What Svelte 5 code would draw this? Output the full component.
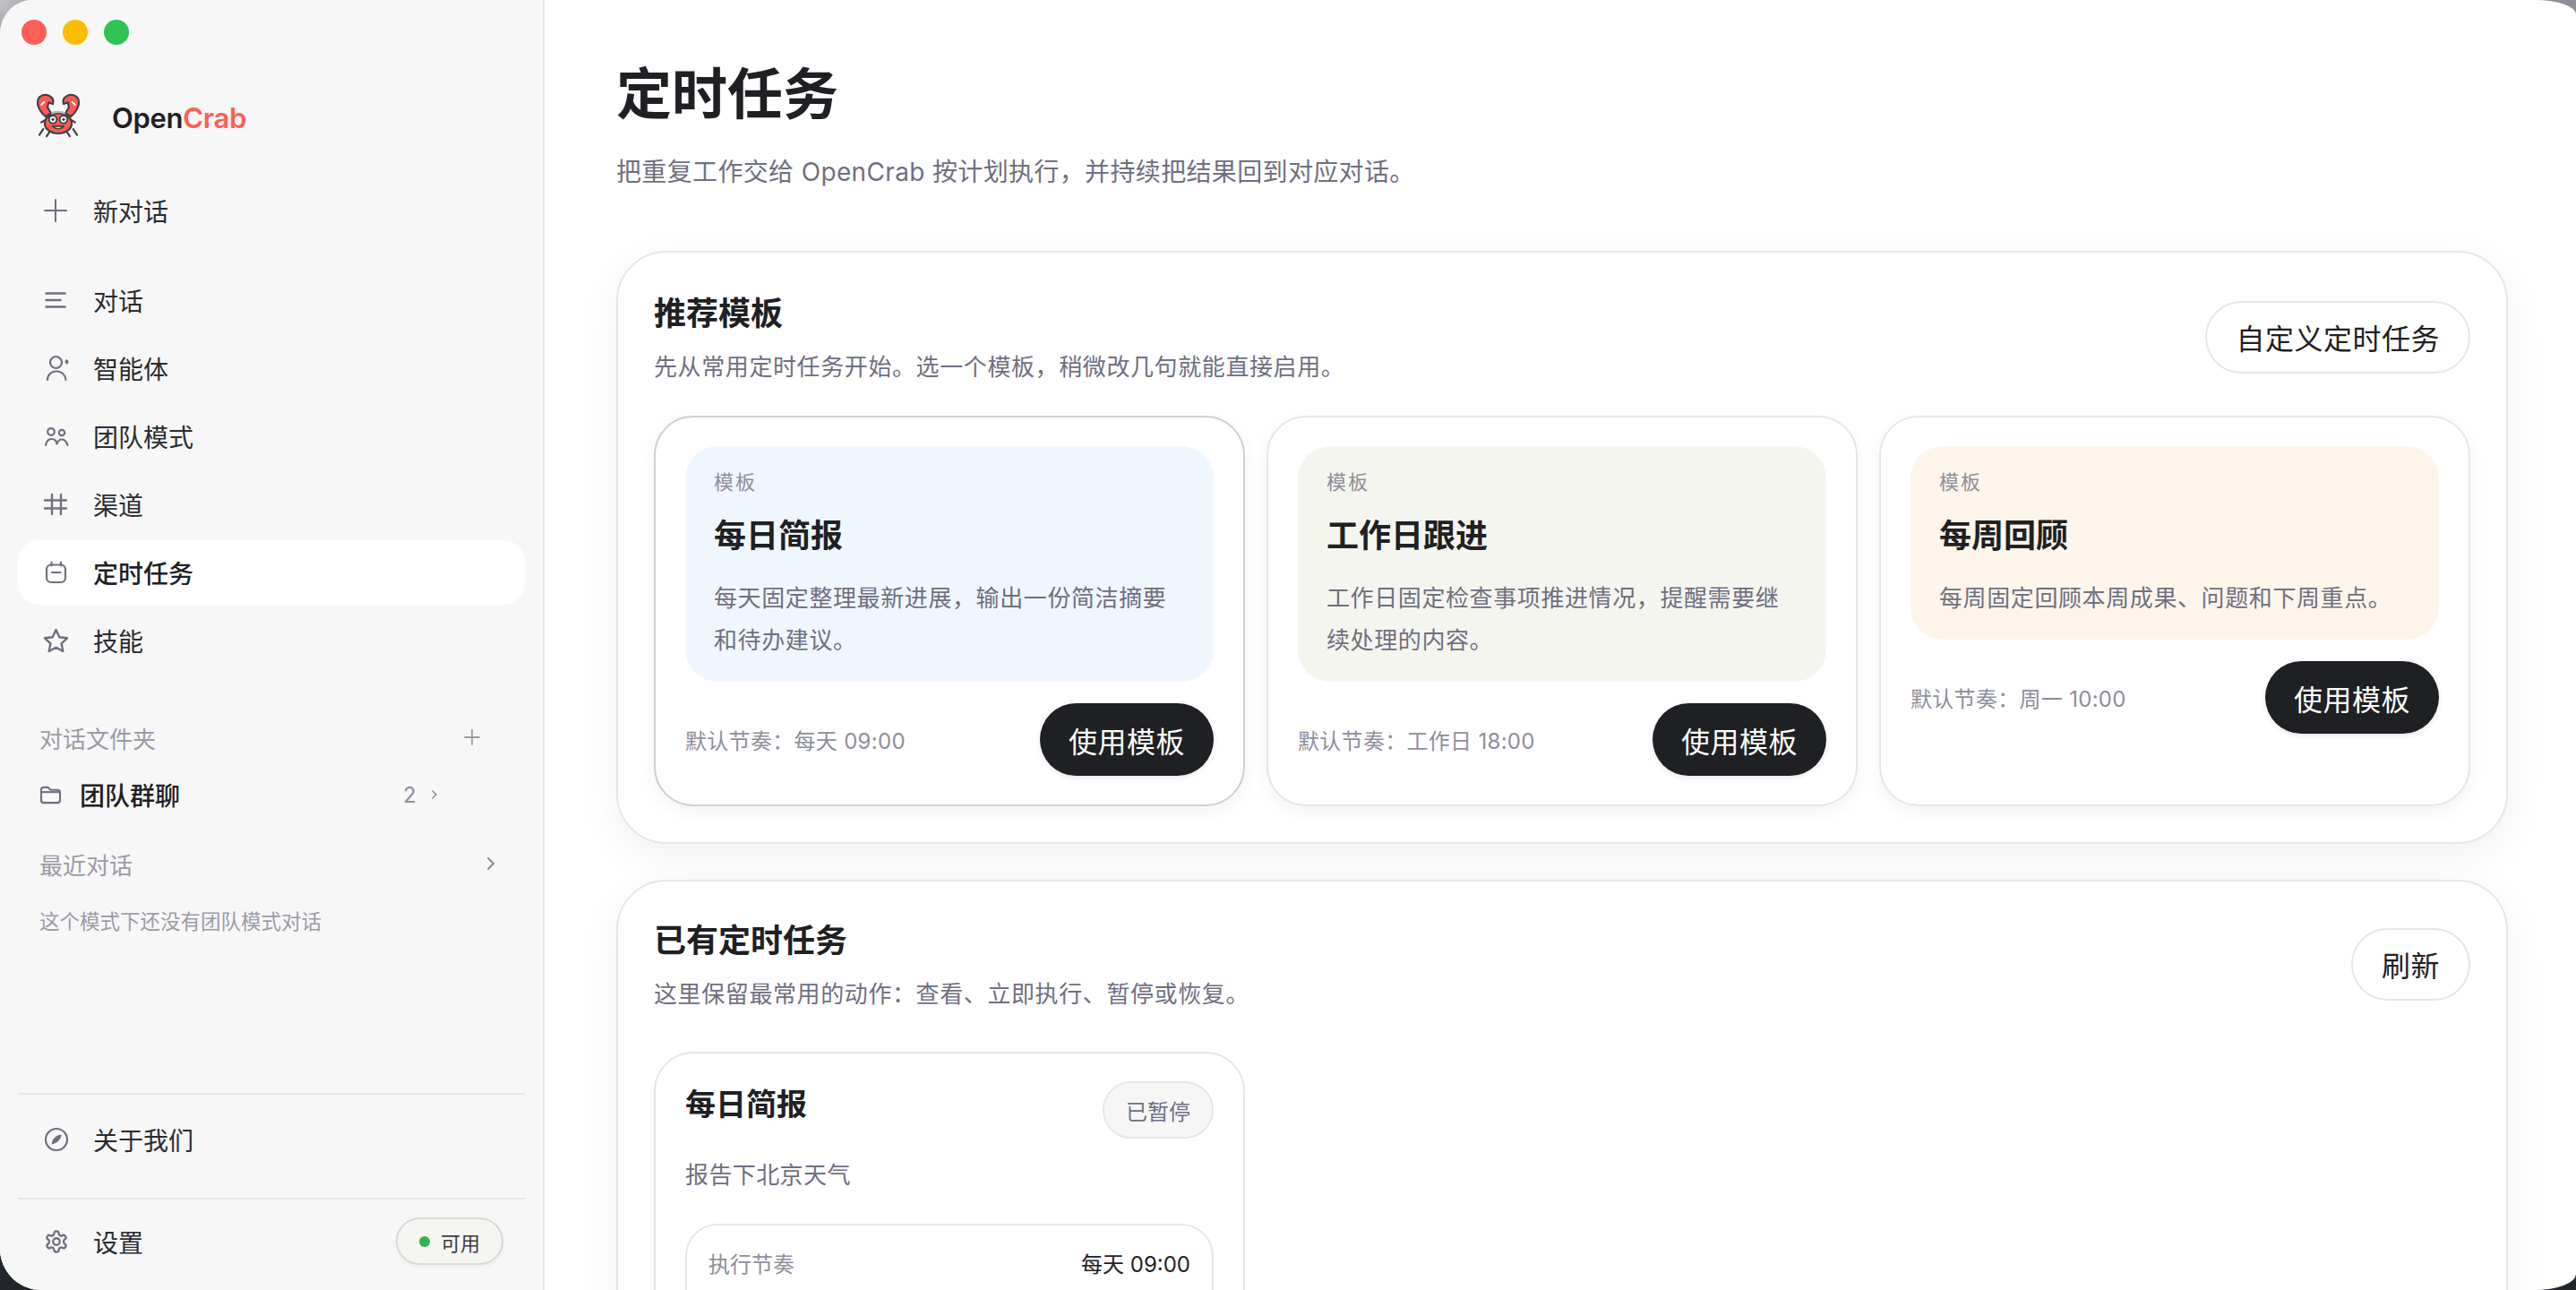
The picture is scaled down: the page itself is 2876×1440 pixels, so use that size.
<script>
  // Sidebar navigation
  const nav = [
    { label: '对话', icon: 'list' },
    { label: '智能体', icon: 'agent' },
    { label: '团队模式', icon: 'team' },
    { label: '渠道', icon: 'hash' },
    { label: '定时任务', icon: 'calendar', active: true },
    { label: '技能', icon: 'star' }
  ];

  const templates = [
    {
      title: '每日简报',
      desc: '每天固定整理最新进展，输出一份简洁摘要和待办建议。',
      cadence: '每天 09:00',
      tone: 'blue',
      focused: true
    },
    {
      title: '工作日跟进',
      desc: '工作日固定检查事项推进情况，提醒需要继续处理的内容。',
      cadence: '工作日 18:00',
      tone: 'sage'
    },
    {
      title: '每周回顾',
      desc: '每周固定回顾本周成果、问题和下周重点。',
      cadence: '周一 10:00',
      tone: 'peach'
    }
  ];
</script>

{#snippet icon(name)}
  <svg class="nav-icon" viewBox="0 0 28 28" fill="none" stroke="currentColor" stroke-width="2.2" stroke-linecap="round" stroke-linejoin="round">
    {#if name === 'plus'}
      <path d="M14 2v24M2 14h24" stroke-width="2" />
    {:else if name === 'list'}
      <path d="M3.5 6.5h21M3.5 14h16M3.5 21.5h21" stroke-width="2.4" />
    {:else if name === 'agent'}
      <circle cx="14.5" cy="7.5" r="6.5" />
      <path d="M5 27c0-5.5 4-9.5 10-9.5s10 4 10.5 9.5" />
      <path d="M26.5 4.5l1.8 2.5-1.8 2.5-1.5-2.5z" fill="currentColor" stroke-width="1" />
    {:else if name === 'team'}
      <circle cx="9" cy="9" r="3.8" />
      <circle cx="21" cy="10" r="3.2" />
      <path d="M3 24c1-5 3.5-7 6.5-7s5.5 2 6 5.5c1-3 3-5 5.5-5s5 2 6.5 6.5" />
    {:else if name === 'hash'}
      <path d="M10 3v22M20 3v22M2 9.5h24M2 18.5h24" stroke-width="2.4" />
    {:else if name === 'calendar'}
      <rect x="4" y="5.5" width="21" height="19.5" rx="5" />
      <path d="M9.5 2.5v4M20 2.5v4M10 14h9.5" />
    {:else if name === 'star'}
      <path d="M14.5 2l3.8 8.2 8.7 1.1-6.4 6 1.7 8.7-7.8-4.3-7.8 4.3 1.7-8.7-6.4-6 8.7-1.1z" stroke-width="2.4" />
    {:else if name === 'compass'}
      <circle cx="15" cy="14" r="12" />
      <path d="M20.5 8.5c-5.5.5-10 3.5-11 11 5.5-1 10.5-5 11-11z" fill="currentColor" stroke="none" />
    {:else if name === 'gear'}
      <g transform="translate(1 0) scale(1.167)" stroke-width="2">
        <path d="M12.22 2h-.44a2 2 0 0 0-2 2v.18a2 2 0 0 1-1 1.73l-.43.25a2 2 0 0 1-2 0l-.15-.08a2 2 0 0 0-2.73.73l-.22.38a2 2 0 0 0 .73 2.73l.15.1a2 2 0 0 1 1 1.72v.51a2 2 0 0 1-1 1.74l-.15.09a2 2 0 0 0-.73 2.73l.22.38a2 2 0 0 0 2.73.73l.15-.08a2 2 0 0 1 2 0l.43.25a2 2 0 0 1 1 1.73V20a2 2 0 0 0 2 2h.44a2 2 0 0 0 2-2v-.18a2 2 0 0 1 1-1.73l.43-.25a2 2 0 0 1 2 0l.15.08a2 2 0 0 0 2.73-.73l.22-.39a2 2 0 0 0-.73-2.73l-.15-.08a2 2 0 0 1-1-1.74v-.5a2 2 0 0 1 1-1.74l.15-.09a2 2 0 0 0 .73-2.73l-.22-.38a2 2 0 0 0-2.73-.73l-.15.08a2 2 0 0 1-2 0l-.43-.25a2 2 0 0 1-1-1.73V4a2 2 0 0 0-2-2z" />
        <circle cx="12" cy="12" r="3.2" />
      </g>
    {/if}
  </svg>
{/snippet}

<div class="window">
  <aside class="sidebar">
    <div class="lights">
      <span class="light dot-red"></span>
      <span class="light dot-yellow"></span>
      <span class="light dot-green"></span>
    </div>

    <div class="brand">
      <svg class="crab" viewBox="10 8 50 50">
        <g stroke="#3d4148" stroke-width="2" stroke-linecap="round" stroke-linejoin="round">
          <path d="M19.5 47l-4 6M26 50l-3 4.5M44 50l3 4.5M50.5 47l4 6M21 38l-3.5 2M49 38l3.5 2" fill="none" />
          <path d="M22 34c-5-4-9.5-11-8-17 1.5-5 8-7 12.5-4 3 2 4 5 3 8l-4.5-1.5-1 5 3.5 6z" fill="#ff5a4f" />
          <path d="M48 34c5-4 9.5-11 8-17-1.5-5-8-7-12.5-4-3 2-4 5-3 8l4.5-1.5 1 5-3.5 6z" fill="#ff5a4f" />
          <ellipse cx="35" cy="41" rx="14" ry="10.5" fill="#ff5a4f" />
        </g>
        <path d="M28 31c3-2.5 11-2.5 14 0" fill="none" stroke="#b9b9be" stroke-width="2" />
        <circle cx="29.5" cy="37" r="4" fill="#fff" stroke="#3d4148" stroke-width="1.8" />
        <circle cx="40.5" cy="37" r="4" fill="#fff" stroke="#3d4148" stroke-width="1.8" />
        <circle cx="29.5" cy="37" r="1.5" fill="#3d4148" />
        <circle cx="40.5" cy="37" r="1.5" fill="#3d4148" />
        <path d="M29 44c3.5 3.5 8.5 3.5 12 0z" fill="#fff" stroke="#3d4148" stroke-width="1.5" stroke-linejoin="round" />
        <path d="M17.5 22l3-3M49.5 19l3 3" stroke="#fff" stroke-width="1.8" stroke-linecap="round" />
      </svg>
      <span class="brand-name">Open<em>Crab</em></span>
    </div>

    <div class="nav-item new-chat">
      {@render icon('plus')}
      <span>新对话</span>
    </div>

    <nav class="nav">
      {#each nav as item}
        <div class="nav-item" class:active={item.active}>
          {@render icon(item.icon)}
          <span>{item.label}</span>
        </div>
      {/each}
    </nav>

    <div class="section-row folders">
      <span>对话文件夹</span>
      <svg class="mini-plus" viewBox="0 0 18 18" fill="none" stroke="currentColor" stroke-width="1.8" stroke-linecap="round"><path d="M9 1v16M1 9h16" /></svg>
    </div>

    <div class="folder-row">
      <svg class="folder-icon" viewBox="0 0 26 22" fill="none" stroke="currentColor" stroke-width="2.2" stroke-linejoin="round">
        <path d="M2 5a3 3 0 0 1 3-3h5l3 3h8a3 3 0 0 1 3 3v9a3 3 0 0 1-3 3H5a3 3 0 0 1-3-3z" />
        <path d="M2 7.5h22" />
      </svg>
      <span class="folder-name">团队群聊</span>
      <span class="folder-count">2</span>
      <svg class="folder-chev" viewBox="0 0 8 12" fill="none" stroke="currentColor" stroke-width="1.6" stroke-linecap="round" stroke-linejoin="round"><path d="M2 2l4 4-4 4" /></svg>
    </div>

    <div class="section-row recent">
      <span>最近对话</span>
      <svg class="recent-chev" viewBox="0 0 10 16" fill="none" stroke="currentColor" stroke-width="2" stroke-linecap="round" stroke-linejoin="round"><path d="M2 2l6 6-6 6" /></svg>
    </div>

    <p class="empty">这个模式下还没有团队模式对话</p>

    <div class="spacer"></div>

    <div class="foot about">
      <div class="nav-item">
        {@render icon('compass')}
        <span>关于我们</span>
      </div>
    </div>
    <div class="foot settings">
      <div class="nav-item">
        {@render icon('gear')}
        <span>设置</span>
      </div>
      <span class="status"><i></i>可用</span>
    </div>
  </aside>

  <main class="main">
    <h1>定时任务</h1>
    <p class="lead">把重复工作交给 OpenCrab 按计划执行，并持续把结果回到对应对话。</p>

    <section class="panel">
      <header class="panel-head">
        <div>
          <h2>推荐模板</h2>
          <p>先从常用定时任务开始。选一个模板，稍微改几句就能直接启用。</p>
        </div>
        <button class="ghost">自定义定时任务</button>
      </header>
      <div class="grid">
        {#each templates as t}
          <article class="tpl" class:focused={t.focused}>
            <div class="tpl-body {t.tone}">
              <span class="eyebrow">模板</span>
              <h3>{t.title}</h3>
              <p>{t.desc}</p>
            </div>
            <div class="tpl-foot">
              <span>默认节奏：{t.cadence}</span>
              <button class="solid">使用模板</button>
            </div>
          </article>
        {/each}
      </div>
    </section>

    <section class="panel second">
      <header class="panel-head">
        <div>
          <h2>已有定时任务</h2>
          <p>这里保留最常用的动作：查看、立即执行、暂停或恢复。</p>
        </div>
        <button class="ghost">刷新</button>
      </header>
      <div class="grid">
        <article class="task">
          <div class="task-head">
            <h3>每日简报</h3>
            <span class="paused">已暂停</span>
          </div>
          <p class="task-desc">报告下北京天气</p>
          <div class="task-meta">
            <span>执行节奏</span>
            <strong>每天 09:00</strong>
          </div>
        </article>
      </div>
    </section>
  </main>
</div>

<style>
  :global(html), :global(body) {
    margin: 0;
    height: 1440px;
    overflow: hidden;
    background:
      radial-gradient(60px at 0 0, #c4c4c8, transparent),
      linear-gradient(180deg, #8e8e98 0, #8e8e98 40px, #22252a 1400px);
  }

  .window {
    display: flex;
    width: 2876px;
    height: 1440px;
    border-radius: 36px 45px 46px 46px / 38px 16px 18px 46px;
    overflow: hidden;
    background: #fff;
    font-family: Inter, "Noto Sans CJK SC", sans-serif;
    color: #1f2023;
  }

  /* Sidebar */
  .sidebar {
    width: 608px;
    flex: none;
    box-sizing: border-box;
    padding: 22px 20px 0;
    display: flex;
    flex-direction: column;
    background: #f7f7f8;
    border-right: 2px solid #e6e6e8;
  }

  .lights {
    display: flex;
    gap: 18px;
    padding-left: 4px;
  }

  .light {
    width: 28px;
    height: 28px;
    border-radius: 50%;
  }

  .dot-red { background: #ff5f57; }
  .dot-yellow { background: #febc00; }
  .dot-green { background: #2fc353; }

  .brand {
    display: flex;
    align-items: center;
    gap: 33px;
    margin: 52px 0 0 18px;
    height: 54px;
  }

  .crab {
    width: 54px;
    height: 54px;
    flex: none;
  }

  .brand-name {
    font-size: 31px;
    font-weight: 600;
    letter-spacing: -0.3px;
    padding-top: 4px;
  }

  .brand-name em {
    font-style: normal;
    color: #ff5f52;
  }

  .nav-item {
    display: flex;
    align-items: center;
    gap: 28px;
    height: 72px;
    padding-left: 28px;
    border-radius: 24px;
    font-size: 28px;
    color: #2a2b2f;
  }

  .nav-item .nav-icon {
    width: 28px;
    height: 28px;
    flex: none;
    color: #6f6f80;
    overflow: visible;
  }

  .new-chat {
    margin-top: 43px;
  }

  .nav {
    display: flex;
    flex-direction: column;
    gap: 4px;
    margin-top: 28px;
  }

  .nav-item.active {
    background: #fff;
    font-weight: 500;
    color: #1f2023;
  }

  .section-row {
    display: flex;
    align-items: center;
    justify-content: space-between;
    padding: 0 24px;
    font-size: 26px;
    color: #9b9ba6;
    height: 36px;
  }

  .folders {
    margin-top: 54px;
    padding-right: 50px;
  }

  .mini-plus {
    width: 18px;
    height: 18px;
  }

  .folder-row {
    display: flex;
    align-items: center;
    margin-top: 28px;
    padding-left: 24px;
    height: 36px;
  }

  .folder-icon {
    width: 25px;
    height: 21px;
    color: #6f6f80;
    flex: none;
  }

  .folder-name {
    margin-left: 20px;
    font-size: 28px;
    font-weight: 500;
    width: 361px;
  }

  .folder-count {
    font-size: 24px;
    color: #8e8e9a;
  }

  .folder-chev {
    width: 8px;
    height: 12px;
    margin-left: 16px;
    color: #8e8e9a;
  }

  .recent {
    margin-top: 41px;
    padding-right: 33px;
  }

  .recent-chev {
    width: 10px;
    height: 16px;
    color: #8a8a96;
  }

  .empty {
    margin: 32px 0 0 24px;
    font-size: 22.5px;
    line-height: 30px;
    color: #9b9ba6;
  }

  .spacer {
    flex: 1;
  }

  .foot {
    border-top: 2px solid #e6e6e8;
  }

  .about {
    padding: 14px 0 29px;
  }

  .settings {
    display: flex;
    align-items: center;
    justify-content: space-between;
    height: 103px;
    box-sizing: border-box;
    padding: 0 24px 8px 0;
  }

  .status {
    display: flex;
    align-items: center;
    gap: 12px;
    height: 53px;
    padding: 0 24px;
    box-sizing: border-box;
    border: 2px solid #d9d9dc;
    border-radius: 27px;
    background: #f5f6f2;
    font-size: 22px;
    color: #3a3b40;
    box-shadow: 0 2px 4px rgba(0, 0, 0, 0.05);
  }

  .status i {
    width: 12px;
    height: 12px;
    border-radius: 50%;
    background: #2fb350;
  }

  /* Main column */
  .main {
    flex: 1;
    min-width: 0;
    box-sizing: border-box;
    padding: 66px 76px 0 80px;
    overflow: hidden;
  }

  h1 {
    margin: 0;
    font-size: 62px;
    line-height: 80px;
    font-weight: 700;
  }

  .lead {
    margin: 26px 0 0;
    font-size: 28px;
    line-height: 40px;
    letter-spacing: 0.35px;
    color: #6f6f80;
  }

  .panel {
    margin-top: 68px;
    padding: 42px 40px 40px;
    background: #fff;
    border: 2px solid #e6e6e8;
    border-radius: 56px;
    box-shadow: 0 14px 48px rgba(20, 20, 30, 0.06);
  }

  .panel.second {
    margin-top: 40px;
    padding-top: 40px;
  }

  .panel-head {
    display: flex;
    justify-content: space-between;
    align-items: center;
  }

  h2 {
    margin: 0;
    font-size: 36px;
    line-height: 52px;
    font-weight: 700;
  }

  .panel-head p {
    margin: 16px 0 0;
    font-size: 26px;
    line-height: 36px;
    letter-spacing: 0.6px;
    color: #6f6f80;
  }

  button {
    font: inherit;
    border-radius: 42px;
    height: 81px;
    padding: 0 32px;
    font-size: 32px;
    letter-spacing: 0.5px;
  }

  .ghost {
    background: #fff;
    border: 2px solid #e6e6e8;
    color: #1f2023;
  }

  .solid {
    background: #1f2023;
    border: 0;
    color: #fff;
    flex: none;
    box-shadow: 0 2px 6px rgba(0, 0, 0, 0.1);
  }

  .grid {
    display: grid;
    grid-template-columns: repeat(3, 1fr);
    gap: 24px;
    margin-top: 36px;
  }

  .second .grid {
    margin-top: 46px;
  }

  .tpl {
    padding: 32px 33px 32px;
    background: #fff;
    border: 2px solid #e6e6e8;
    border-radius: 44px;
    box-shadow: 0 6px 20px rgba(20, 20, 30, 0.05);
  }

  .tpl.focused {
    border-color: #cfcfd2;
  }

  .tpl-body {
    padding: 24px 32px 23px;
    border-radius: 36px;
  }

  .blue { background: #f0f6fe; }
  .sage { background: #f4f5ee; }
  .peach { background: #fef5ea; }

  .eyebrow {
    display: block;
    font-size: 22px;
    line-height: 32px;
    letter-spacing: 2px;
    color: #8e8e9a;
  }

  h3 {
    margin: 0;
    font-size: 36px;
    line-height: 52px;
    font-weight: 700;
  }

  .tpl-body h3 {
    margin-top: 18px;
  }

  .tpl-body p {
    margin: 20px 0 0;
    font-size: 26px;
    line-height: 47px;
    letter-spacing: 0.6px;
    color: #6f6f80;
  }

  .tpl-foot {
    display: flex;
    justify-content: space-between;
    align-items: center;
    margin-top: 24px;
    font-size: 24px;
    letter-spacing: 0.3px;
    color: #8e8e9a;
  }

  .task {
    padding: 31px 33px;
    border: 2px solid #e6e6e8;
    border-radius: 44px;
  }

  .task-head {
    display: flex;
    justify-content: space-between;
    align-items: flex-start;
  }

  .task-head h3 {
    font-size: 34px;
  }

  .paused {
    height: 64px;
    box-sizing: border-box;
    padding: 0 24px;
    display: flex;
    align-items: center;
    font-size: 24px;
    color: #6f6f80;
    background: #f6f6f7;
    border: 2px solid #e6e6e8;
    border-radius: 32px;
  }

  .task-desc {
    margin: 23px 0 0;
    font-size: 26px;
    line-height: 36px;
    letter-spacing: 0.4px;
    color: #6f6f80;
  }

  .task-meta {
    display: flex;
    justify-content: space-between;
    align-items: center;
    margin-top: 36px;
    padding: 24px 24px 60px;
    border: 2px solid #e6e6e8;
    border-radius: 36px;
    font-size: 24px;
    color: #8e8e9a;
  }

  .task-meta strong {
    font-weight: 400;
    color: #1f2023;
    font-size: 24px;
  }
</style>
